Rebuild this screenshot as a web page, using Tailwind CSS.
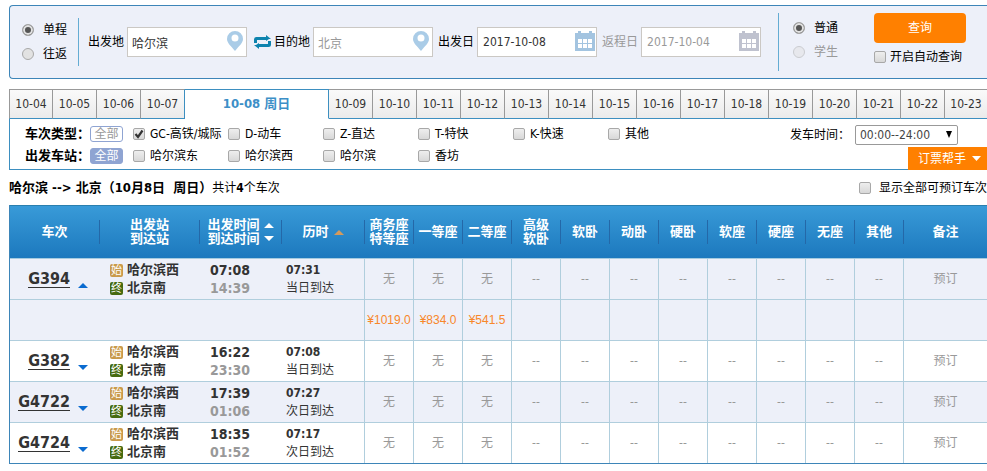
<!DOCTYPE html>
<html lang="zh-CN">
  <head>
    <meta charset="UTF-8" />
    <meta name="viewport" content="width=device-width, initial-scale=1.0" />
    <title>车票预订</title>
    <script src="https://cdn.jsdelivr.net/npm/@tailwindcss/browser@4"></script>
  </head>
  <body class="bg-white pl-[9px] pt-[5px] overflow-x-hidden text-xs text-black whitespace-nowrap font-['DejaVu_Sans_Condensed','Noto_Sans_CJK_SC',sans-serif] [&_input[type=checkbox]]:appearance-none [&_input[type=checkbox]]:size-3 [&_input[type=checkbox]]:shrink-0 [&_input[type=checkbox]]:rounded-xs [&_input[type=checkbox]]:border [&_input[type=checkbox]]:border-[#a8a8a8] [&_input[type=checkbox]]:bg-linear-to-b [&_input[type=checkbox]]:from-[#eee] [&_input[type=checkbox]]:to-[#d8d8d8] [&_input[type=radio]]:appearance-none [&_input[type=radio]]:size-3 [&_input[type=radio]]:shrink-0 [&_input[type=radio]]:rounded-full [&_input[type=radio]]:border [&_input[type=radio]]:border-[#a8a8a8] [&_input[type=radio]]:bg-[#e2e2e2]">
    <svg class="hidden">
      <symbol id="pin" viewBox="0 0 16 20">
        <path fill="currentColor" fill-rule="evenodd" d="M8 0a8 8 0 0 0-8 8c0 4 4 7 8 12 4-5 8-8 8-12a8 8 0 0 0-8-8zm0 3.500a3.500 3.500 0 1 1 0 7 3.500 3.500 0 0 1 0-7z" />
      </symbol>
      <symbol id="calendar" viewBox="0 0 20 20">
        <path fill="currentColor" fill-rule="evenodd" d="M0 2h3V0h3v2h8V0h3v2h3v18H0zM3 8v4h4V8zm5 0v4h4V8zm5 0v4h4V8zM3 13v4h4v-4zm5 0v4h4v-4zm5 0v4h4v-4z" />
      </symbol>
    </svg>

    <!-- Search bar -->
    <form class="flex h-[74px] items-center rounded-l border border-r-0 border-[#3d85b8] bg-[#edf0f9] pl-3">
      <div class="flex h-12 w-[57px] shrink-0 flex-col justify-between border-r border-[#64acd3]">
        <label class="flex h-6 items-center gap-[9px]"><input type="radio" name="trip" checked class="checked:shadow-[inset_0_0_0_2px_#e2e2e2] checked:bg-[#555]!" />单程</label>
        <label class="flex h-6 items-center gap-[9px]"><input type="radio" name="trip" />往返</label>
      </div>

      <label for="from" class="ml-[9px]">出发地</label>
      <div class="relative ml-[3px] shrink-0">
        <input id="from" type="text" value="哈尔滨" class="block h-[30px] w-[120px] border border-[#cbc8c4] bg-white pl-1 text-[#333]" />
        <svg class="absolute right-1 top-1 h-5 w-4 text-[#aacce7]"><use href="#pin" /></svg>
      </div>
      <button type="button" aria-label="交换" class="ml-[7px] mr-[3px] shrink-0 text-[#0d83ae]">
        <svg class="h-[14px] w-[17px]" viewBox="0 0 17 14">
          <path fill="currentColor" d="M0 8V4.500Q0 2 2.500 2H12V0l5 4h-2l-3 2V5H3v3zM17 6v3.500q0 2.500-2.500 2.500H5v2l-5-4h2l3-2v1h9V6z" />
        </svg>
      </button>
      <label for="to">目的地</label>
      <div class="relative ml-[3px] shrink-0">
        <input id="to" type="text" value="北京" class="block h-[30px] w-[120px] border border-[#cbc8c4] bg-white pl-1 text-[#999]" />
        <svg class="absolute right-1 top-1 h-5 w-4 text-[#aacce7]"><use href="#pin" /></svg>
      </div>
      <label for="depart" class="ml-[5px]">出发日</label>
      <div class="relative ml-[3px] shrink-0">
        <input id="depart" type="text" value="2017-10-08" class="block h-[30px] w-[120px] border border-[#cbc8c4] bg-white pl-[5px] text-[#333]" />
        <svg class="absolute right-[2px] top-1 size-5 text-[#a3c4e0]"><use href="#calendar" /></svg>
      </div>
      <label for="return" class="ml-[5px] text-[#999]">返程日</label>
      <div class="relative ml-[3px] shrink-0">
        <input id="return" type="text" value="2017-10-04" class="block h-[30px] w-[120px] border border-[#cbc8c4] bg-white pl-[5px] text-[#999]" />
        <svg class="absolute right-[2px] top-1 size-5 text-[#bfc2cf]"><use href="#calendar" /></svg>
      </div>

      <div class="ml-[17px] flex h-[58px] shrink-0 flex-col justify-center border-l border-[#64acd3] pl-[14px] pb-1">
        <label class="flex h-6 items-center gap-[9px]"><input type="radio" name="kind" checked class="checked:shadow-[inset_0_0_0_2px_#e2e2e2] checked:bg-[#555]!" />普通</label>
        <label class="flex h-6 items-center gap-[9px] text-[#999]"><input type="radio" name="kind" disabled class="opacity-50" />学生</label>
      </div>
      <div class="mb-1 ml-9 shrink-0">
        <button type="submit" class="block h-[30px] w-[92px] rounded bg-[#ff8000] text-white">查询</button>
        <label class="mt-1 flex h-5 items-center gap-1"><input type="checkbox" />开启自动查询</label>
      </div>
    </form>

    <!-- Date tabs -->
    <div class="mt-[10px] flex h-[30px] [&_button]:w-11 [&_button]:shrink-0 [&_button]:border-r [&_button]:border-y [&_button]:border-[#999] [&_button]:border-b-[#3d8fc0] [&_button]:bg-linear-to-b [&_button]:from-[#fafafa] [&_button]:to-[#ebebeb] [&_button]:text-[#333]">
      <button class="border-l">10-04</button>
      <button>10-05</button>
      <button>10-06</button>
      <button class="border-r-[#3d8fc0]!">10-07</button>
      <button class="w-36! border-[#3d8fc0]! border-b-white! from-white! to-white! text-[13px] font-bold text-[#3d8fc7]!">10-08 周日</button>
      <button>10-09</button>
      <button>10-10</button>
      <button>10-11</button>
      <button>10-12</button>
      <button>10-13</button>
      <button>10-14</button>
      <button>10-15</button>
      <button>10-16</button>
      <button>10-17</button>
      <button>10-18</button>
      <button>10-19</button>
      <button>10-20</button>
      <button>10-21</button>
      <button>10-22</button>
      <button class="flex-1 border-r-0!">10-23</button>
    </div>

    <!-- Filters -->
    <div class="flex justify-between border-b border-l border-[#3d8fc0] pl-[15px]">
      <div class="pt-1 pb-[2px] [&_label]:flex [&_label]:w-[95px] [&_label]:items-center [&_label]:gap-[5px]">
        <div class="flex h-[22px] items-center">
          <b class="w-[65px] text-[13px]">车次类型：</b>
          <button class="mr-[10px] h-4 w-[33px] rounded-[3px] border border-[#8fa4d2] leading-3 text-[#999]">全部</button>
          <label><span class="relative flex"><input type="checkbox" checked /><svg class="pointer-events-none absolute inset-0 size-3" viewBox="0 0 12 12"><path fill="none" stroke="#333" stroke-width="2.200" d="M2.500 6l2.500 3 4.500-6.500" /></svg></span>GC-高铁/城际</label>
          <label><input type="checkbox" />D-动车</label>
          <label><input type="checkbox" />Z-直达</label>
          <label><input type="checkbox" />T-特快</label>
          <label><input type="checkbox" />K-快速</label>
          <label><input type="checkbox" />其他</label>
        </div>
        <div class="flex h-[22px] items-center">
          <b class="w-[65px] text-[13px]">出发车站：</b>
          <button class="mr-[10px] h-4 w-[33px] rounded-[3px] border border-[#8fa4d2] bg-[#8fa4d2] leading-3 text-white">全部</button>
          <label><input type="checkbox" />哈尔滨东</label>
          <label><input type="checkbox" />哈尔滨西</label>
          <label><input type="checkbox" />哈尔滨</label>
          <label><input type="checkbox" />香坊</label>
        </div>
      </div>
      <div class="flex w-[197px] shrink-0 flex-col justify-between pt-[6px]">
        <div class="flex items-center">
          <label for="time" class="w-[65px]">发车时间：</label>
          <div class="relative">
            <select id="time" class="block h-5 w-[103px] appearance-none rounded-xs border border-[#999] bg-white pl-1 text-[#444]">
              <option>00:00--24:00</option>
            </select>
            <svg class="pointer-events-none absolute right-[6px] top-[6px] h-[7px] w-[6px]" viewBox="0 0 6 7"><path d="M0 0h6L3 7z" /></svg>
          </div>
        </div>
        <button class="-mb-px flex h-[23px] w-[79px] items-center gap-[6px] self-end bg-[#ff8000] pl-[10px] text-white">订票帮手
          <svg class="h-[5px] w-[9px]" viewBox="0 0 9 5"><path fill="#fff" d="M0 0h9L4.500 5z" /></svg>
        </button>
      </div>
    </div>

    <div class="flex h-[35px] items-center justify-between">
      <p><b class="whitespace-pre text-[13px]">哈尔滨 --&gt; 北京（10月8日  周日）</b>共计<b>4</b>个车次</p>
      <label class="flex items-center gap-2"><input type="checkbox" />显示全部可预订车次</label>
    </div>

    <!-- Train list -->
    <table class="w-full table-fixed border-separate border-spacing-0 border-b border-l border-[#3d85b8] text-center text-[#999] [&_td]:h-10 [&_tr+tr_td]:h-[41px] [&_td]:border-[#b0cedd] [&_tr+tr_td]:border-t [&_td+td+td+td]:border-r [&_td:last-child]:border-r-0! [&_th]:p-0 [&_th]:h-[54px] [&_th]:border-t [&_th]:border-t-[#2a7fae] [&_th]:border-b [&_th]:border-b-[#a5cbe0] [&_th>div]:flex [&_th>div]:h-6 [&_th>div]:items-center [&_th>div]:justify-center [&_th>div]:gap-1 [&_th>div]:border-r [&_th>div]:border-[#2468a8] [&_th>div]:leading-[14px] [&_th:last-child>div]:border-r-0">
      <colgroup>
        <col class="w-[90px]" />
        <col class="w-[100px]" />
        <col class="w-[82px]" />
        <col class="w-[83px]" />
        <col span="11" class="w-[49px]" />
        <col />
      </colgroup>
      <thead class="text-[13px] text-white">
        <tr class="bg-linear-to-b from-[#399bd8] to-[#1b78bd]">
          <th><div>车次</div></th>
          <th><div>出发站<br />到达站</div></th>
          <th><div>
            <span>出发时间<br />到达时间</span>
            <svg class="h-[18px] w-[10px]" viewBox="0 0 10 18"><path fill="#fff" d="M0 5l5-5 5 5zM0 13h10l-5 5z" /></svg>
          </div></th>
          <th><div>历时<svg class="ml-px h-[5px] w-[10px]" viewBox="0 0 10 5"><path fill="#d39a5d" d="M0 5l5-5 5 5z" /></svg></div></th>
          <th><div>商务座<br />特等座</div></th>
          <th><div>一等座</div></th>
          <th><div>二等座</div></th>
          <th><div>高级<br />软卧</div></th>
          <th><div>软卧</div></th>
          <th><div>动卧</div></th>
          <th><div>硬卧</div></th>
          <th><div>软座</div></th>
          <th><div>硬座</div></th>
          <th><div>无座</div></th>
          <th><div>其他</div></th>
          <th><div>备注</div></th>
        </tr>
      </thead>
      <tbody class="[&_.train]:flex [&_.train]:items-center [&_.train]:justify-end [&_.train]:gap-2 [&_.train]:pr-3 [&_.train_a]:border-b [&_.train_a]:text-base [&_.train_a]:leading-4 [&_.train_a]:font-bold [&_.train_a]:text-[#333] [&_.train_svg]:mt-3 [&_.train_svg]:h-[5px] [&_.train_svg]:w-[10px] [&_.train_svg]:text-[#0a6bd0] [&_.stop]:flex [&_.stop]:h-[18px] [&_.stop]:items-center [&_.stop]:gap-1 [&_.stop]:pl-[10px] [&_.stop]:text-[13px] [&_.stop]:font-bold [&_.stop]:text-[#333] [&_.stop_i]:size-[13px] [&_.stop_i]:rounded-xs [&_.stop_i]:text-[11px] [&_.stop_i]:leading-[13px] [&_.stop_i]:font-normal [&_.stop_i]:not-italic [&_.stop_i]:text-white [&_.time]:pl-[10px] [&_.time]:text-left [&_.time]:text-sm [&_.time]:leading-[18px] [&_.time]:font-bold [&_.time_b]:text-[#333] [&_.span]:pl-1 [&_.span]:text-left [&_.span]:leading-[18px] [&_.span]:text-[#333]">
        <tr class="bg-[#edf0f9]">
          <td class="p-0"><div class="train"><a href="#">G394</a><svg viewBox="0 0 10 5"><path fill="currentColor" d="M0 5l5-5 5 5z" /></svg></div></td>
          <td class="p-0"><div class="stop"><i class="bg-[#c99a4b]">始</i>哈尔滨西</div><div class="stop"><i class="bg-[#466a10]">终</i>北京南</div></td>
          <td class="time p-0"><b>07:08</b><br />14:39</td>
          <td class="span p-0"><b>07:31</b><br />当日到达</td>
          <td>无</td><td>无</td><td>无</td><td>--</td><td>--</td><td>--</td><td>--</td><td>--</td><td>--</td><td>--</td><td>--</td><td>预订</td>
        </tr>
        <tr class="bg-[#edf0f9] font-['Liberation_Sans','Noto_Sans_CJK_SC',sans-serif] text-[#f8872a]">
          <td></td><td></td><td></td><td></td>
          <td class="p-0">¥1019.0</td><td class="p-0">¥834.0</td><td class="p-0">¥541.5</td>
          <td></td><td></td><td></td><td></td><td></td><td></td><td></td><td></td><td></td>
        </tr>
        <tr>
          <td class="p-0"><div class="train"><a href="#">G382</a><svg viewBox="0 0 10 5"><path fill="currentColor" d="M0 0h10L5 5z" /></svg></div></td>
          <td class="p-0"><div class="stop"><i class="bg-[#c99a4b]">始</i>哈尔滨西</div><div class="stop"><i class="bg-[#466a10]">终</i>北京南</div></td>
          <td class="time p-0"><b>16:22</b><br />23:30</td>
          <td class="span p-0"><b>07:08</b><br />当日到达</td>
          <td>无</td><td>无</td><td>无</td><td>--</td><td>--</td><td>--</td><td>--</td><td>--</td><td>--</td><td>--</td><td>--</td><td>预订</td>
        </tr>
        <tr class="bg-[#edf0f9]">
          <td class="p-0"><div class="train"><a href="#">G4722</a><svg viewBox="0 0 10 5"><path fill="currentColor" d="M0 0h10L5 5z" /></svg></div></td>
          <td class="p-0"><div class="stop"><i class="bg-[#c99a4b]">始</i>哈尔滨西</div><div class="stop"><i class="bg-[#466a10]">终</i>北京南</div></td>
          <td class="time p-0"><b>17:39</b><br />01:06</td>
          <td class="span p-0"><b>07:27</b><br />次日到达</td>
          <td>无</td><td>无</td><td>无</td><td>--</td><td>--</td><td>--</td><td>--</td><td>--</td><td>--</td><td>--</td><td>--</td><td>预订</td>
        </tr>
        <tr>
          <td class="p-0"><div class="train"><a href="#">G4724</a><svg viewBox="0 0 10 5"><path fill="currentColor" d="M0 0h10L5 5z" /></svg></div></td>
          <td class="p-0"><div class="stop"><i class="bg-[#c99a4b]">始</i>哈尔滨西</div><div class="stop"><i class="bg-[#466a10]">终</i>北京南</div></td>
          <td class="time p-0"><b>18:35</b><br />01:52</td>
          <td class="span p-0"><b>07:17</b><br />次日到达</td>
          <td>无</td><td>无</td><td>无</td><td>--</td><td>--</td><td>--</td><td>--</td><td>--</td><td>--</td><td>--</td><td>--</td><td>预订</td>
        </tr>
      </tbody>
    </table>
  </body>
</html>
